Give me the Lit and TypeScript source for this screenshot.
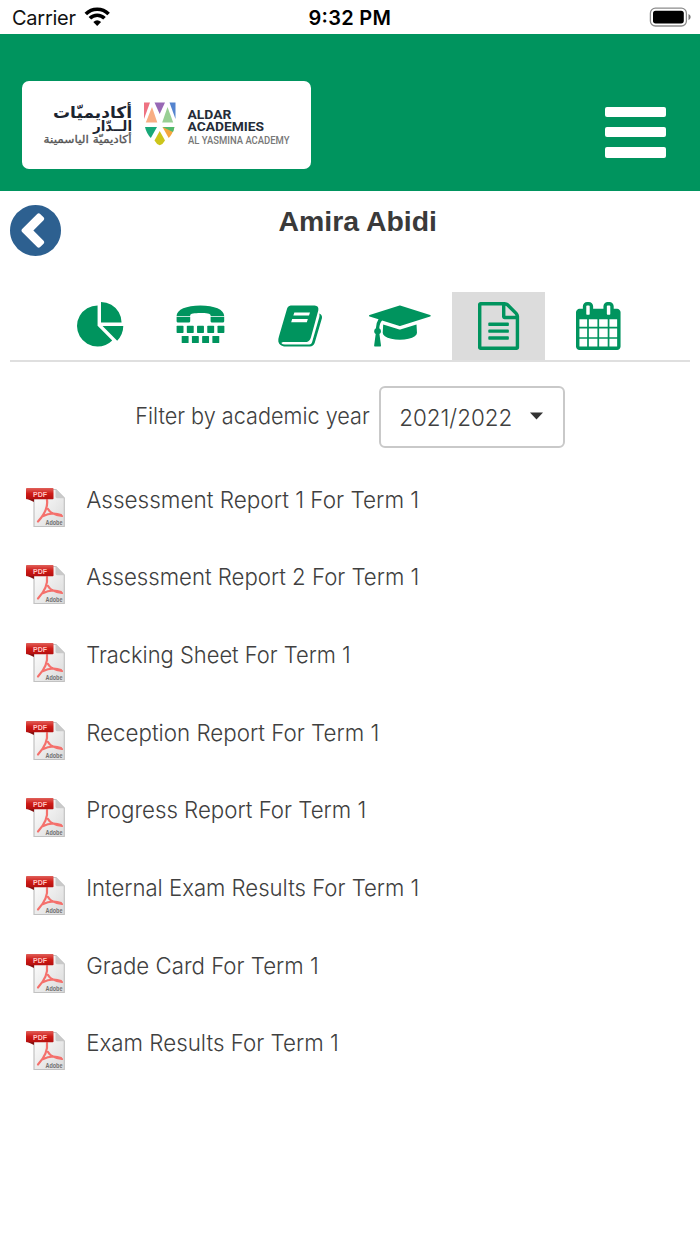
import { LitElement, html, css, svg } from "lit";
import { customElement, property } from "lit/decorators.js";

const REPORTS: [string, number][] = [
  ["Assessment Report 1 For Term 1", 333],
  ["Assessment Report 2 For Term 1", 333],
  ["Tracking Sheet For Term 1", 264.5],
  ["Reception Report For Term 1", 293],
  ["Progress Report For Term 1", 280],
  ["Internal Exam Results For Term 1", 333],
  ["Grade Card For Term 1", 232.5],
  ["Exam Results For Term 1", 252.5],
];

const PIE = "M768 890l546 546q-106 108-247.5 168t-298.5 60q-209 0-385.5-103t-279.5-279.5-103-385.5 103-385.5 279.5-279.5 385.5-103v762zm187 6h773q0 157-60 298.5t-168 247.5zm709-128h-768v-768q209 0 385.5 103t279.5 279.5 103 385.5z";
const CAP = "M1774 836l18 316q4 69-82 128t-235 93.5-323 34.5-323-34.5-235-93.5-82-128l18-316 574 181q22 7 48 7t48-7zm530-324q0 23-22 31l-1120 352q-4 1-10 1t-10-1l-652-206q-43 34-71 111.5t-34 178.5q63 36 63 109 0 69-58 107l58 433q2 14-8 25-9 11-24 11h-192q-15 0-24-11-10-11-8-25l58-433q-58-38-58-107 0-73 65-111 11-207 98-330l-333-104q-22-8-22-31t22-31l1120-352q4-1 10-1t10 1l1120 352q22 8 22 31z";
const FILE = "M1468 380q28 28 48 76t20 88v1152q0 40-28 68t-68 28h-1344q-40 0-68-28t-28-68v-1600q0-40 28-68t68-28h896q40 0 88 20t76 48zm-444-244v376h376q-10-29-22-41l-313-313q-12-12-41-22zm384 1528v-1024h-416q-40 0-68-28t-28-68v-416h-768v1536h1280zm-1024-864q0-14 9-23t23-9h704q14 0 23 9t9 23v64q0 14-9 23t-23 9h-704q-14 0-23-9t-9-23v-64zm736 224q14 0 23 9t9 23v64q0 14-9 23t-23 9h-704q-14 0-23-9t-9-23v-64q0-14 9-23t23-9h704zm0 256q14 0 23 9t9 23v64q0 14-9 23t-23 9h-704q-14 0-23-9t-9-23v-64q0-14 9-23t23-9h704z";
const CALENDAR = "M128 1664h288v-288h-288v288zm352 0h320v-288h-320v288zm-352-352h288v-320h-288v320zm352 0h320v-320h-320v320zm-352-384h288v-288h-288v288zm736 736h320v-288h-320v288zm-384-736h320v-288h-320v288zm768 736h288v-288h-288v288zm-384-352h320v-320h-320v320zm-352-864v-288q0-13-9.5-22.5t-22.5-9.5h-64q-13 0-22.5 9.5t-9.5 22.5v288q0 13 9.5 22.5t22.5 9.5h64q13 0 22.5-9.5t9.5-22.5zm736 864h288v-320h-288v320zm-384-384h320v-288h-320v288zm384 0h288v-288h-288v288zm32-480v-288q0-13-9.5-22.5t-22.5-9.5h-64q-13 0-22.5 9.5t-9.5 22.5v288q0 13 9.5 22.5t22.5 9.5h64q13 0 22.5-9.5t9.5-22.5zm384-64v1280q0 52-38 90t-90 38h-1408q-52 0-90-38t-38-90v-1280q0-52 38-90t90-38h128v-96q0-66 47-113t113-47h64q66 0 113 47t47 113v96h384v-96q0-66 47-113t113-47h64q66 0 113 47t47 113v96h128q52 0 90 38t38 90z";
const BACK = "M1037 1395l102-102q19-19 19-45t-19-45l-307-307 307-307q19-19 19-45t-19-45l-102-102q-19-19-45-19t-45 19l-454 454q-19 19-19 45t19 45l454 454q19 19 45 19t45-19zm627-499q0 209-103 385.5t-279.5 279.5-385.5 103-385.5-103-279.5-279.5-103-385.5 103-385.5 279.5-279.5 385.5-103 385.5 103 279.5 279.5 103 385.5z";

const glyph = (path: string, units: number) => html`
  <svg width=${(units * 48) / 1792} height="48" viewBox="0 0 ${units} 1792"><path fill="currentColor" d=${path}></path></svg>`;

const bookGlyph = html`
  <svg width="44.600" height="48" viewBox="17 7.200 133.800 144">
    <path fill="currentColor" d="M55 18H127Q140 19 138 32L116 113Q112 126 103 127H33Q26 127 28 132Q30 135 38 135H111Q117 135 119 129L141 52Q142 47 141 42Q150 46 149 55L127 130Q123 140 113 140.500H35Q21 139 18 126Q17 119 20 110L43 31Q46 19 55 18Z"></path>
    <path fill="#fff" d="M66 38.500H113L110 48H63ZM59.500 58.500H106.500L103.500 68H56.500Z"></path>
  </svg>`;

const ttyGlyph = html`
  <svg width="48" height="48" viewBox="0.6 0 48 48" fill="currentColor">
    <path d="M.2 14C.2 7.600 10 3.500 24 3.500S47.800 7.600 47.800 14H34.200V13.200C34.200 11.700 30 11 24 11S13.800 11.700 13.800 13.200V14Z"></path>
    <path d="M.2 14.700H13.800V19.200Q13.800 20.600 12.400 20.600H1.600Q.2 20.600 .2 19.200ZM34.200 14.700H47.800V19.200Q47.800 20.600 46.400 20.600H35.600Q34.200 20.600 34.200 19.200Z"></path>
    ${[0, 1, 2, 3, 4].map((i) => svg`<rect x=${0.2 + i * 10.22} y="23.700" width="6.900" height="7.200" rx="0.700"></rect>`)}
    ${[0, 1, 2, 3].map((i) => svg`<rect x=${5.3 + i * 10.22} y="33.900" width="6.900" height="7.200" rx="0.700"></rect>`)}
  </svg>`;

@customElement("fitted-text")
class FittedText extends LitElement {
  @property() text = "";
  @property({ type: Number }) width = 100;
  @property({ type: Number }) size = 23.4;

  static styles = css`
    :host { display: block; }
    svg { display: block; overflow: visible; }
    text { fill: #404040; font-family: Inter, "Liberation Sans", sans-serif; font-weight: 300; }
  `;

  render() {
    return html`<svg width=${this.width} height="30">
      <text x="-0.800" y="22" font-size=${this.size} textLength=${this.width} lengthAdjust="spacingAndGlyphs">${this.text}</text>
    </svg>`;
  }
}

@customElement("pdf-icon")
class PdfIcon extends LitElement {
  static styles = css`
    :host { display: block; }
    svg { display: block; }
    text { font-family: "Liberation Sans", sans-serif; font-weight: 700; }
  `;

  render() {
    return html`<svg width="42" height="42" viewBox="0 0 42 42">
      <defs>
        <linearGradient id="page" x2="1" y2="1"><stop stop-color="#fff"></stop><stop offset="1" stop-color="#dadada"></stop></linearGradient>
        <linearGradient id="band" x2="0" y2="1"><stop stop-color="#e0605a"></stop><stop offset=".5" stop-color="#cf1b17"></stop><stop offset="1" stop-color="#b30f0f"></stop></linearGradient>
      </defs>
      <path d="M9 2.500H31L39.300 11V39.500H9Z" fill="url(#page)" stroke="#c2c2c2" stroke-width="1.200"></path>
      <path d="M30.500 2.500L39.300 11.300H32Q30.500 11.300 30.500 9.500Z" fill="#c9c9c9"></path>
      <path d="M22 13C23 20 19 28 13 34.500M23 22C25 26 29 28 37 29M17 29.500C23 26.500 30 25.500 36 28" fill="none" stroke="#f4706c" stroke-width="2.200" stroke-linecap="round"></path>
      <path d="M1.500 11.500L9 15V11.500Z" fill="#841111"></path>
      <rect x="1" y="1" width="27.500" height="11.200" rx=".8" fill="url(#band)"></rect>
      <text x="8" y="9.600" font-size="7.500" textLength="14" lengthAdjust="spacingAndGlyphs" fill="#ffc4c2">PDF</text>
      <text x="20.500" y="37.500" font-size="7.500" textLength="17" lengthAdjust="spacingAndGlyphs" fill="#707070">Adobe</text>
    </svg>`;
  }
}

@customElement("app-root")
class AppRoot extends LitElement {
  static styles = css`
    :host { display: block; height: 1244px; background: #fff; color: #3c3c3c; overflow: hidden; font-family: Inter, "Liberation Sans", sans-serif; }
    * { box-sizing: border-box; }
    svg { display: block; flex: none; overflow: visible; }
    .status { height: 34px; }
    .status text { font-family: Inter, sans-serif; font-size: 20px; fill: #111; }
    .status .clock { font-weight: 600; fill: #000; }
    .header { height: 157px; background: #00945e; display: flex; justify-content: space-between; align-items: flex-start; padding: 47px 34px 0 22px; }
    .logo { width: 289px; height: 88px; border-radius: 7px; background: #fff; }
    .ar { font-family: "DejaVu Sans", sans-serif; direction: rtl; }
    .latin { font-family: Roboto, "Liberation Sans", sans-serif; }
    .menu { display: grid; gap: 9.800px; padding-top: 25.500px; width: 61px; }
    .bar { height: 10.500px; border-radius: 2px; background: #fff; }
    .title { height: 101px; display: grid; grid-template-columns: 51px 1fr 51px; padding: 14.300px 10.300px 0; align-items: start; }
    .title .back { color: #2d6090; }
    .name { justify-self: center; }
    .name text { font-family: "Liberation Sans", sans-serif; font-weight: 700; font-size: 28.500px; fill: #3a3a3a; }
    .tabs { margin: 0 10px; height: 70px; padding-left: 41.400px; border-bottom: 2px solid #dfdfdf; display: grid; grid-template-columns: repeat(6, 99.450px); color: #00945e; }
    .tab { width: 93px; height: 68px; justify-self: center; display: flex; justify-content: center; align-items: flex-start; padding-top: 10.400px; }
    .active { background: #dcdcdc; }
    .filter { display: flex; align-items: center; padding: 24px 0 0 135.500px; gap: 9px; }
    .select { display: flex; align-items: center; gap: 16.500px; width: 185.500px; height: 62px; border: 2px solid #c9c9c9; border-radius: 6px; padding: 3px 0 0 19px; }
    .select svg { margin-bottom: 6px; }
    .list { padding: 37.500px 0 0 25px; }
    .row { height: 77.700px; display: flex; gap: 20px; align-items: flex-start; }
    .row pdf-icon { padding-top: 1px; }
  `;

  render() {
    const tabs = [glyph(PIE, 1792), ttyGlyph, bookGlyph, glyph(CAP, 2304), glyph(FILE, 1536), glyph(CALENDAR, 1664)];
    return html`
      <div class="status">
        <svg width="700" height="34">
          <text x="12" y="25" textLength="64">Carrier</text>
          <g fill="none" stroke="#000" stroke-width="3.600">
            <path d="M85.800 14A16 16 0 0 1 108.600 14"></path>
            <path d="M89.900 18.300A10.200 10.200 0 0 1 104.500 18.300"></path>
          </g>
          <path d="M97.200 26L93.300 22Q97.200 18.700 101.100 22Z"></path>
          <text class="clock" x="308.500" y="25" textLength="82.500">9:32 PM</text>
          <rect x="650.400" y="8.200" width="36" height="17.800" rx="5" fill="none" stroke="#8c8c8c" stroke-width="1.300"></rect>
          <rect x="653" y="10.800" width="30.800" height="12.600" rx="2.600"></rect>
          <path d="M688.500 14Q690.700 15 690.700 17T688.500 20.200Z" fill="#777"></path>
        </svg>
      </div>
      <div class="header">
        <div class="logo">
          <svg width="289" height="88" viewBox="22 81 289 88">
            <g class="ar" font-weight="700">
              <text x="132" y="117.500" font-size="16" textLength="79" lengthAdjust="spacingAndGlyphs" fill="#1c2430">أكاديميّات</text>
              <text x="132" y="130.500" font-size="14" textLength="39" lengthAdjust="spacingAndGlyphs" fill="#1c2430">الــدّار</text>
              <text x="131.500" y="143" font-size="11" font-weight="400" textLength="88" lengthAdjust="spacingAndGlyphs" fill="#555" stroke="#555" stroke-width=".3">أكاديميّة الياسمينة</text>
            </g>
            <path d="M144 102.500H150L144 119Z" fill="#ee7282"></path>
            <path d="M154.500 102.500H165L159.700 114Z" fill="#9868b5"></path>
            <path d="M169.500 102.500H175.500V119Z" fill="#5484cf"></path>
            <path d="M152 107L157.300 122.500H145.800Z" fill="#f8ad83"></path>
            <path d="M167.500 107L173.200 122.500H162.200Z" fill="#98cf94"></path>
            <path d="M145 127H157L150.800 138Q146.500 133.500 145 127Z" fill="#18a878"></path>
            <path d="M162.500 127H174.400Q173 133.500 168.700 138Z" fill="#f5a63e"></path>
            <path d="M162.500 127H174.400Q174 129.500 173 132Z" fill="#52b96c"></path>
            <path d="M159.700 131L165 140.500Q163 144.300 159.700 145.300Q156.500 144.300 154.500 140.500Z" fill="#ccc51b"></path>
            <g class="latin">
              <text x="187.500" y="119" font-size="13.500" font-weight="700" textLength="44" lengthAdjust="spacingAndGlyphs" fill="#252c38">ALDAR</text>
              <text x="187.500" y="131" font-size="13.500" font-weight="700" textLength="76.500" lengthAdjust="spacingAndGlyphs" fill="#252c38">ACADEMIES</text>
              <text x="188" y="143.500" font-size="10" font-weight="500" textLength="101.500" lengthAdjust="spacingAndGlyphs" fill="#777">AL YASMINA ACADEMY</text>
            </g>
          </svg>
        </div>
        <div class="menu"><div class="bar"></div><div class="bar"></div><div class="bar"></div></div>
      </div>
      <div class="title">
        <svg class="back" width="51" height="51" viewBox="128 128 1536 1536"><path fill="currentColor" d=${BACK}></path></svg>
        <div class="name"><svg width="158" height="34"><text x="7.500" y="26" textLength="158.500" lengthAdjust="spacingAndGlyphs">Amira Abidi</text></svg></div>
      </div>
      <div class="tabs">
        ${tabs.map((t, i) => html`<div class="tab ${i === 4 ? "active" : ""}">${t}</div>`)}
      </div>
      <div class="filter">
        <fitted-text text="Filter by academic year" width="234.500"></fitted-text>
        <div class="select">
          <fitted-text text="2021/2022" width="113"></fitted-text>
          <svg width="13" height="8" viewBox="0 0 13 8"><path d="M0 .5H13L6.500 7.500Z" fill="#333"></path></svg>
        </div>
      </div>
      <div class="list">
        ${REPORTS.map(([text, width]) => html`<div class="row"><pdf-icon></pdf-icon><fitted-text .text=${text} .width=${width}></fitted-text></div>`)}
      </div>
    `;
  }
}
